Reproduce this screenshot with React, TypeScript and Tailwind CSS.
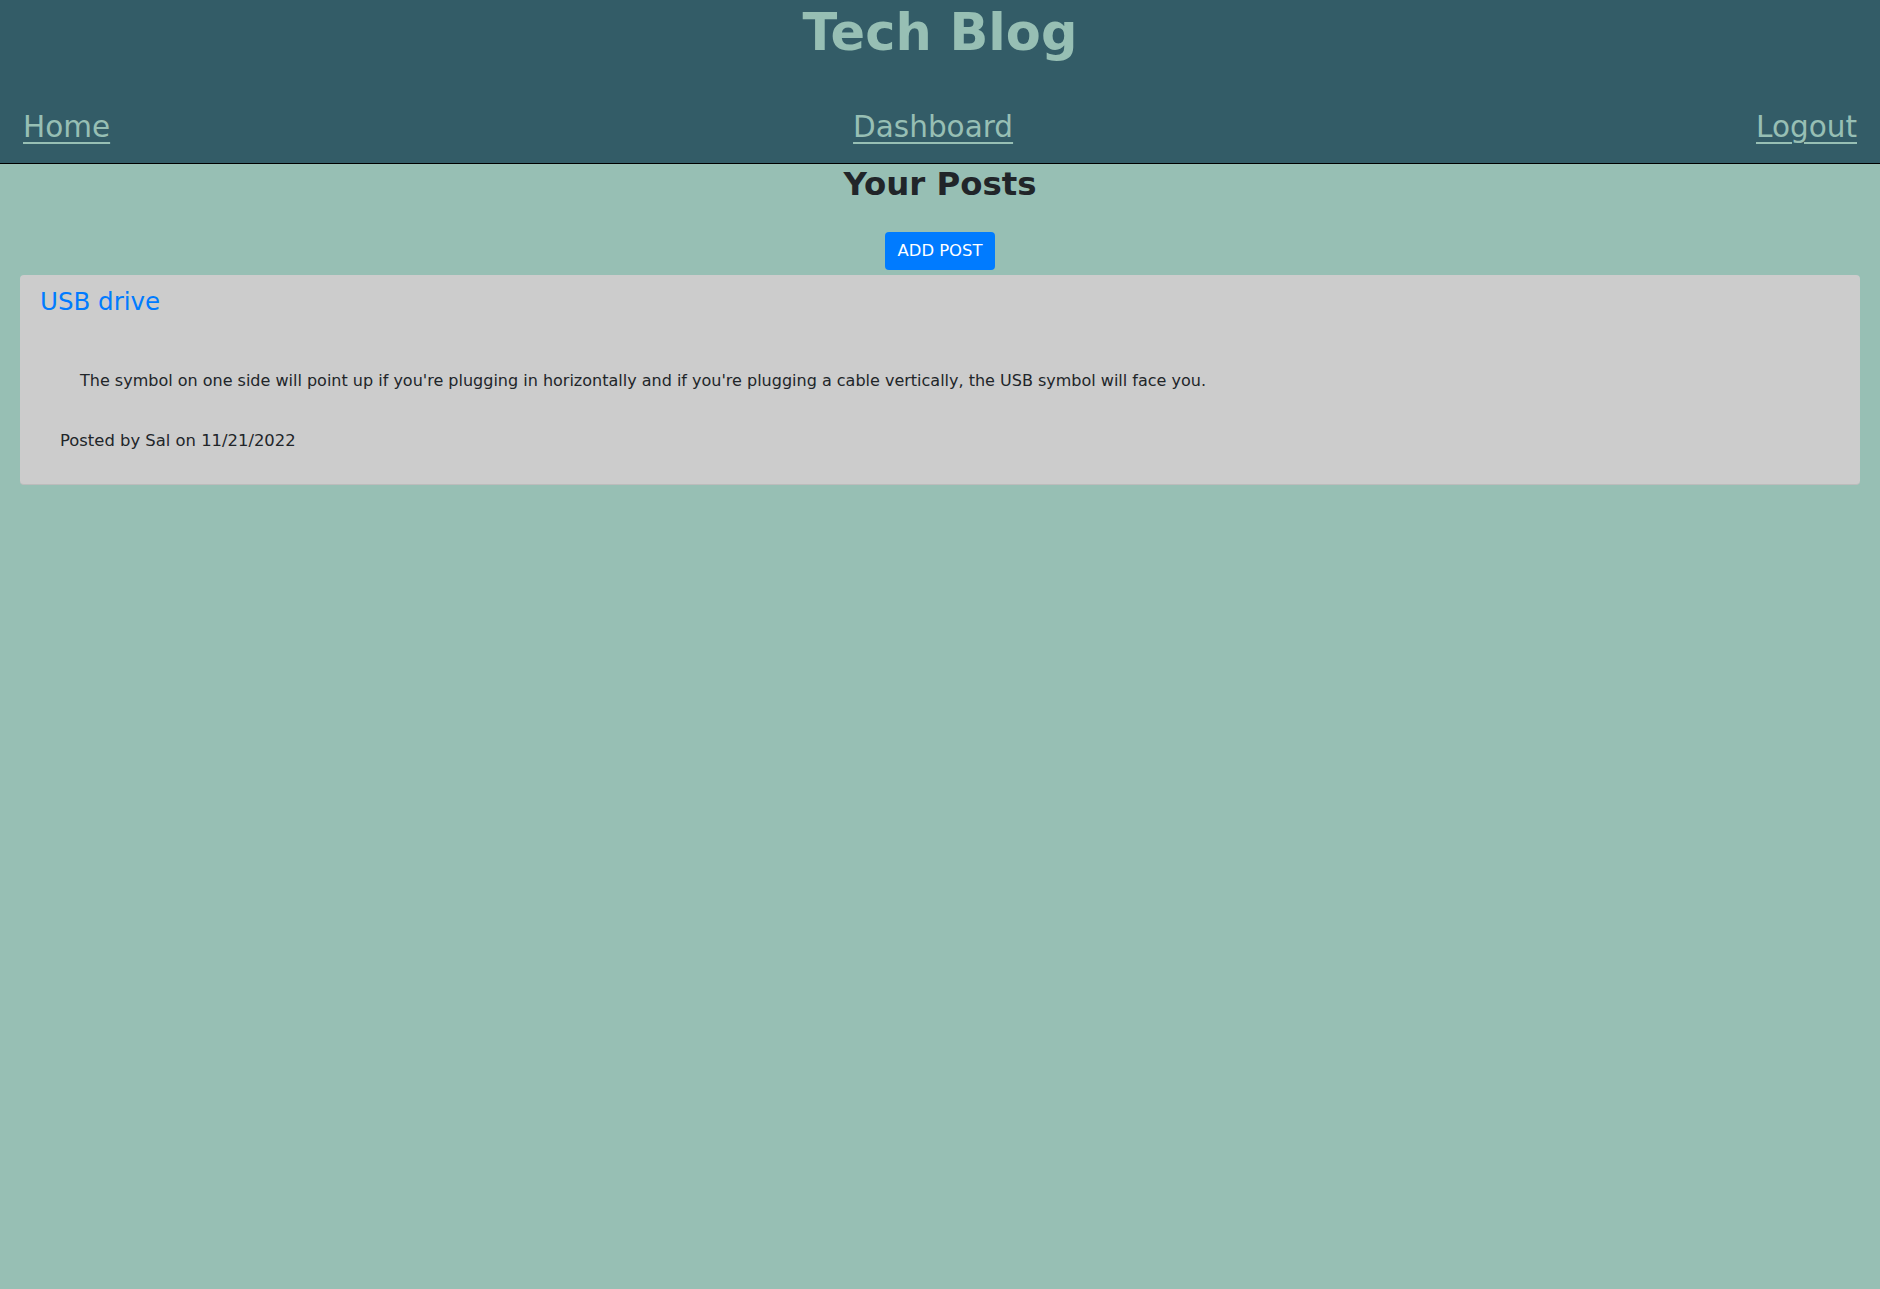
import React from "react";

const posts = [
  {
    id: 1,
    title: "USB drive",
    body: "The symbol on one side will point up if you're plugging in horizontally and if you're plugging a cable vertically, the USB symbol will face you.",
    author: "Sal",
    date: "11/21/2022",
  },
];

function Header() {
  return (
    <header className="bg-[#335c67] border-b border-black h-[164px]">
      <h1 className="pt-[4px] text-center text-[51px] leading-[58px] font-bold text-[#97bfb4]">
        Tech Blog
      </h1>
      <nav className="flex justify-between px-[23px] mt-[43px] text-[29.5px] leading-[44px] text-[#97bfb4]">
        <a href="#" className="underline decoration-2 underline-offset-[5px]">
          Home
        </a>
        <a href="#" className="underline decoration-2 underline-offset-[5px]">
          Dashboard
        </a>
        <a href="#" className="underline decoration-2 underline-offset-[5px]">
          Logout
        </a>
      </nav>
    </header>
  );
}

function PostCard({ post }: { post: (typeof posts)[number] }) {
  return (
    <div className="mx-[20px] bg-[#cccccc] rounded-[4px] border-b border-[#bcbcbc] h-[210px] pt-[12px] px-[20px]">
      <h2 className="text-[24.5px] leading-[29px] text-[#007bff]">
        <a href="#">{post.title}</a>
      </h2>
      <p className="mt-[53px] pl-[40px] text-[16px] leading-[24px] text-[#212529]">
        {post.body}
      </p>
      <p className="mt-[36px] pl-[20px] text-[16.4px] leading-[24px] text-[#212529]">
        Posted by {post.author} on {post.date}
      </p>
    </div>
  );
}

export default function App() {
  return (
    <div
      className="min-h-[1289px] bg-[#97bfb4]"
      style={{ fontFamily: "Verdana, 'DejaVu Sans', sans-serif" }}
    >
      <Header />
      <main className="pt-[1px]">
        <h2 className="text-center text-[32.4px] leading-[38px] font-bold text-[#212529]">
          Your Posts
        </h2>
        <div className="flex justify-center mt-[29px]">
          <button className="bg-[#007bff] text-white text-[16.4px] leading-[24px] px-[13px] py-[7px] rounded-[4px] uppercase">
            Add Post
          </button>
        </div>
        <div className="mt-[5px]">
          {posts.map((p) => (
            <PostCard key={p.id} post={p} />
          ))}
        </div>
      </main>
    </div>
  );
}
